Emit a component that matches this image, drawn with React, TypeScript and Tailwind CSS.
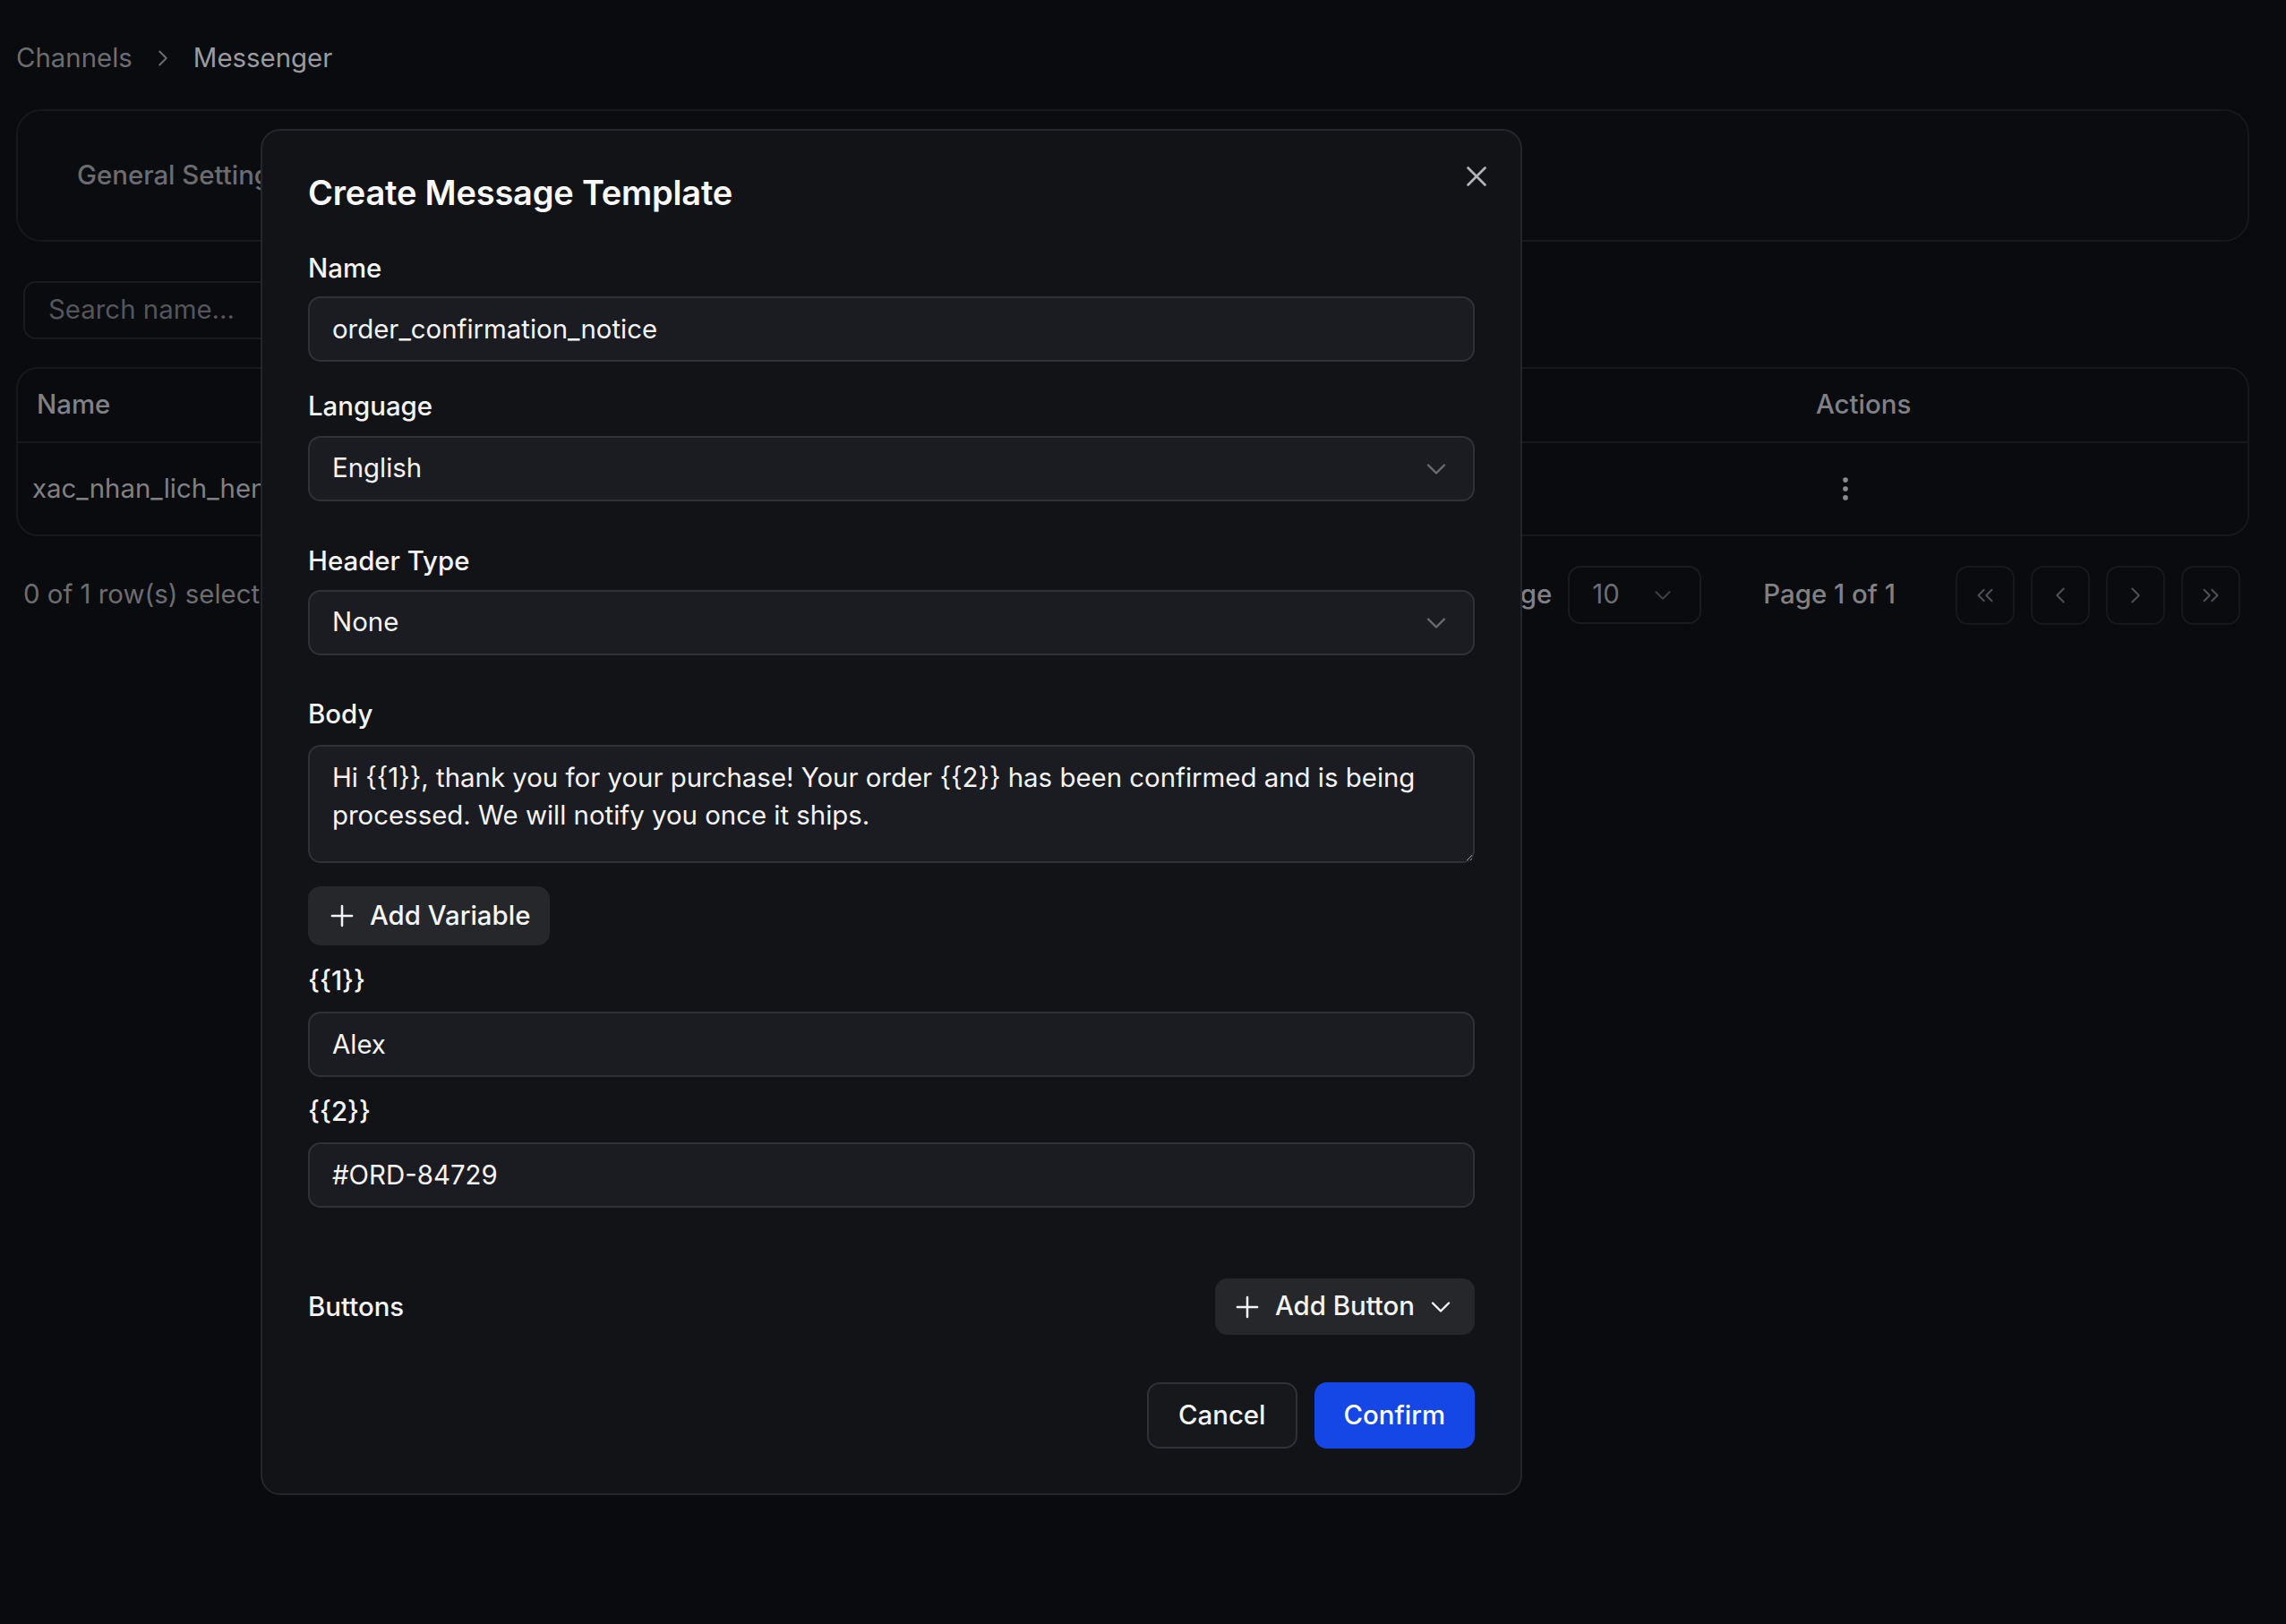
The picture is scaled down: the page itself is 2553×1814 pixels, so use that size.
import React from "react";
import {
  ChevronRight,
  ChevronDown,
  ChevronLeft,
  ChevronsLeft,
  ChevronsRight,
  EllipsisVertical,
  Plus,
  X,
} from "lucide-react";

const Label = ({ children, className = "" }: { children: React.ReactNode; className?: string }) => (
  <div className={`text-[29.4px] leading-[34px] font-medium text-[#f4f4f5] ${className}`}>{children}</div>
);

const TextField = ({ value, className = "" }: { value: string; className?: string }) => (
  <input
    readOnly
    defaultValue={value}
    className={`block w-full h-[73px] rounded-[14px] border-2 border-[#303137] bg-[#1b1c21] px-[25px] text-[29.4px] text-[#f4f4f5] outline-none ${className}`}
  />
);

const SelectField = ({ value, className = "" }: { value: string; className?: string }) => (
  <div
    className={`flex items-center justify-between w-full h-[73px] rounded-[14px] border-2 border-[#303137] bg-[#1b1c21] pl-[25px] pr-[23px] text-[29.4px] text-[#f4f4f5] ${className}`}
  >
    <span>{value}</span>
    <ChevronDown size={36} strokeWidth={1.6} className="text-[#6b6c72]" />
  </div>
);

const PageButton = ({ children }: { children: React.ReactNode }) => (
  <div className="flex items-center justify-center w-[66px] h-[66px] rounded-[14px] border-2 border-[#17181c] text-[#4f5055]">
    {children}
  </div>
);

const App = () => {
  return (
    <div className="relative min-h-[1814px] w-full bg-[#0a0b0e] font-['Inter','Noto_Sans',sans-serif] overflow-hidden">
      {/* page behind the dialog */}
      <div className="px-[18px] pr-[41px] pt-[48px]">
        <div className="flex items-center gap-[19px] text-[29.4px] leading-[34px]">
          <span className="text-[#6c6d72]">Channels</span>
          <ChevronRight size={30} strokeWidth={1.6} className="text-[#6c6d72]" />
          <span className="text-[#9a9ba0]">Messenger</span>
        </div>

        <div className="mt-[40px] h-[148px] rounded-[28px] border-2 border-[#17181c] bg-[#0b0c0f] flex items-center pl-[66px]">
          <span className="text-[29.4px] font-medium text-[#6b6c71]">General Settings</span>
        </div>

        <div className="mt-[44px] ml-[8px] w-[620px] h-[65px] rounded-[14px] border-2 border-[#1a1b1f] flex items-center pl-[26px]">
          <span className="text-[29.4px] text-[#55565b]">Search name...</span>
        </div>

        <div className="mt-[31px] rounded-[24px] border-2 border-[#17181c] overflow-hidden">
          <div className="flex items-center h-[83px] border-b-2 border-[#17181c] text-[29.4px] font-medium text-[#808186]">
            <div className="pl-[21px] flex-1">Name</div>
            <div className="w-[482px]">Actions</div>
          </div>
          <div className="flex items-center h-[102px] text-[29.4px] text-[#808186]">
            <div className="pl-[16px] flex-1">xac_nhan_lich_hen_kham</div>
            <div className="w-[482px]">
              <div className="flex items-center justify-center w-[66px] h-[66px]">
                <EllipsisVertical size={34} strokeWidth={2} className="text-[#8a8b90]" />
              </div>
            </div>
          </div>
        </div>

        <div className="mt-[33px] mr-[10px] flex items-center h-[65px] text-[29.4px] text-[#6c6d72]">
          <span className="pl-[8px]">0 of 1 row(s) selected.</span>
          <div className="ml-auto flex items-center">
            <span className="font-medium text-[#808186]">Rows per page</span>
            <div className="ml-[18px] w-[149px] h-[65px] rounded-[14px] border-2 border-[#1a1b1f] flex items-center justify-between pl-[25px] pr-[26px] text-[#6c6d72]">
              <span>10</span>
              <ChevronDown size={30} strokeWidth={1.6} className="text-[#3f4045]" />
            </div>
            <span className="ml-[69px] font-medium text-[#808186]">Page 1 of 1</span>
            <div className="ml-[67px] flex items-center gap-[18px]">
              <PageButton>
                <ChevronsLeft size={30} strokeWidth={1.6} />
              </PageButton>
              <PageButton>
                <ChevronLeft size={30} strokeWidth={1.6} />
              </PageButton>
              <PageButton>
                <ChevronRight size={30} strokeWidth={1.6} />
              </PageButton>
              <PageButton>
                <ChevronsRight size={30} strokeWidth={1.6} />
              </PageButton>
            </div>
          </div>
        </div>
      </div>

      {/* dialog */}
      <div className="absolute left-[291px] top-[144px] w-[1409px] rounded-[22px] border-2 border-[#25262b] bg-[#121317] px-[51px] pt-[46px] pb-[50px]">
        <button className="absolute top-[32px] right-[30px] text-[#b4b4ba]">
          <X size={38} strokeWidth={1.7} />
        </button>

        <h2 className="text-[38px] leading-[46px] font-semibold text-[#fafafa] tracking-[-0.2px]">
          Create Message Template
        </h2>

        <Label className="mt-[45px]">Name</Label>
        <TextField value="order_confirmation_notice" className="mt-[14px]" />

        <Label className="mt-[33px]">Language</Label>
        <SelectField value="English" className="mt-[16px]" />

        <Label className="mt-[50px]">Header Type</Label>
        <SelectField value="None" className="mt-[15px]" />

        <Label className="mt-[49px]">Body</Label>
        <textarea
          readOnly
          defaultValue="Hi {{1}}, thank you for your purchase! Your order {{2}} has been confirmed and is being processed. We will notify you once it ships."
          className="mt-[17px] block w-full h-[132px] resize-y rounded-[14px] border-2 border-[#303137] bg-[#1b1c21] px-[25px] py-[14px] text-[29.4px] leading-[42px] text-[#f4f4f5] outline-none [color-scheme:dark]"
        />

        <button className="mt-[26px] flex items-center gap-[12px] h-[66px] rounded-[14px] bg-[#26272b] pl-[19px] pr-[22px] text-[29.4px] font-medium text-[#f4f4f5]">
          <Plus size={38} strokeWidth={1.6} />
          <span>Add Variable</span>
        </button>

        <Label className="mt-[23px]">{"{{1}}"}</Label>
        <TextField value="Alex" className="mt-[17px]" />

        <Label className="mt-[22px]">{"{{2}}"}</Label>
        <TextField value="#ORD-84729" className="mt-[17px]" />

        <div className="mt-[79px] flex items-center justify-between">
          <Label>Buttons</Label>
          <button className="flex items-center h-[63px] rounded-[14px] bg-[#26272b] pl-[17px] pr-[20px] text-[29.4px] font-medium text-[#f4f4f5]">
            <Plus size={38} strokeWidth={1.6} />
            <span className="ml-[12px]">Add Button</span>
            <ChevronDown size={36} strokeWidth={1.6} className="ml-[11px]" />
          </button>
        </div>

        <div className="mt-[53px] flex justify-end gap-[19px]">
          <button className="h-[74px] rounded-[14px] border-2 border-[#303137] bg-[#17181c] px-[33px] text-[29.4px] font-medium text-[#f4f4f5]">
            Cancel
          </button>
          <button className="h-[74px] rounded-[14px] bg-[#1547e6] px-[33px] text-[29.4px] font-medium text-white">
            Confirm
          </button>
        </div>
      </div>
    </div>
  );
};

export default App;
